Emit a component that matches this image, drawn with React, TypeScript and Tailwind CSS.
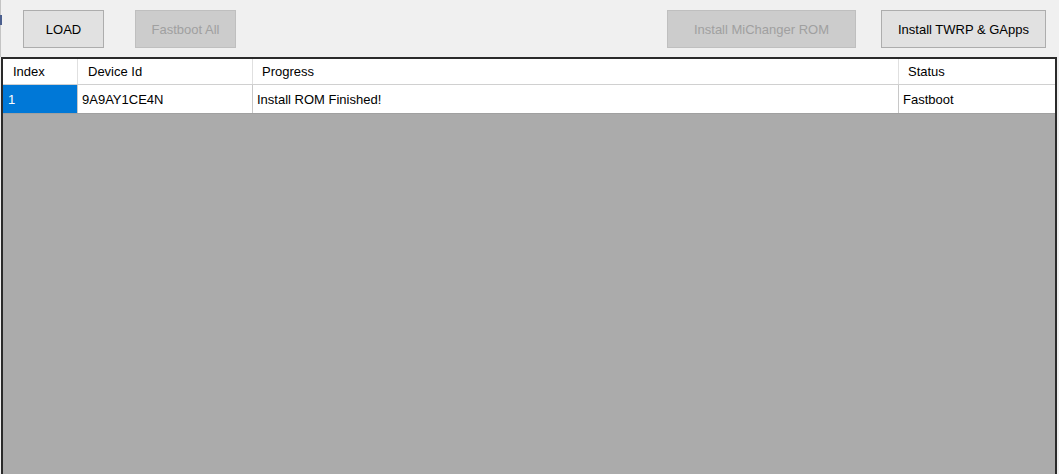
const columns = [
  { label: "Index", width: "w-[75px]", head: "pl-[10px]", cell: "pl-[5px]" },
  { label: "Device Id", width: "w-[175px]", head: "pl-[10px]", cell: "pl-[4px]" },
  { label: "Progress", width: "w-[646px]", head: "pl-[9px]", cell: "pl-[4px]" },
  { label: "Status", width: "w-[156px]", head: "pl-[9px]", cell: "pl-[4px]" },
];

const row = ["1", "9A9AY1CE4N", "Install ROM Finished!", "Fastboot"];

function WinButton({
  label,
  width,
  disabled,
  className = "",
}: {
  label: string;
  width: string;
  disabled?: boolean;
  className?: string;
}) {
  return (
    <button
      disabled={disabled}
      className={
        disabled
          ? `${width} ${className} h-[38px] border border-[#bfbfbf] bg-[#cccccc] text-[#a0a0a0]`
          : `${width} ${className} h-[38px] border border-[#adadad] bg-[#e1e1e1] text-black`
      }
    >
      {label}
    </button>
  );
}

export default function App() {
  return (
    <div className="relative w-[1059px] h-[474px] overflow-hidden bg-[#f0f0f0] flex flex-col font-['Liberation_Sans',Arial,sans-serif] text-[13px] leading-none">
      {/* clipped edge of the neighbouring control */}
      <div className="absolute left-0 top-[15px] w-[2px] h-[10px] bg-[#4b5f8e]" />

      {/* toolbar */}
      <div className="h-[57px] shrink-0 flex items-start pt-[10px] pl-[22px] border-l border-[#c4c4c4]">
        <WinButton label="LOAD" width="w-[81px]" />
        <WinButton label="Fastboot All" width="w-[101px]" className="ml-[31px]" disabled />
        <WinButton label="Install MiChanger ROM" width="w-[189px]" className="ml-[431px]" disabled />
        <WinButton label="Install TWRP & GApps" width="w-[165px]" className="ml-[25px]" />
      </div>

      {/* grid */}
      <div className="ml-[1px] w-[1056px] flex-1 border-t-2 border-l-2 border-r-2 border-[#2a2a2a] bg-[#ababab] flex flex-col">
        <div className="flex h-[26px] bg-white border-b border-[#d0d0d0]">
          {columns.map((c, i) => (
            <div
              key={c.label}
              className={`${c.width} ${c.head} flex items-center ${i < columns.length - 1 ? "border-r border-[#e0e0e0]" : ""}`}
            >
              {c.label}
            </div>
          ))}
        </div>
        <div className="flex h-[29px] bg-white border-b border-[#a0a0a0]">
          {columns.map((c, i) => (
            <div
              key={c.label}
              className={`${c.width} ${c.cell} flex items-center ${i < columns.length - 1 ? "border-r border-[#c8c8c8]" : ""} ${i === 0 ? "bg-[#0078d7] text-white" : "text-black"}`}
            >
              {row[i]}
            </div>
          ))}
        </div>
      </div>
    </div>
  );
}
